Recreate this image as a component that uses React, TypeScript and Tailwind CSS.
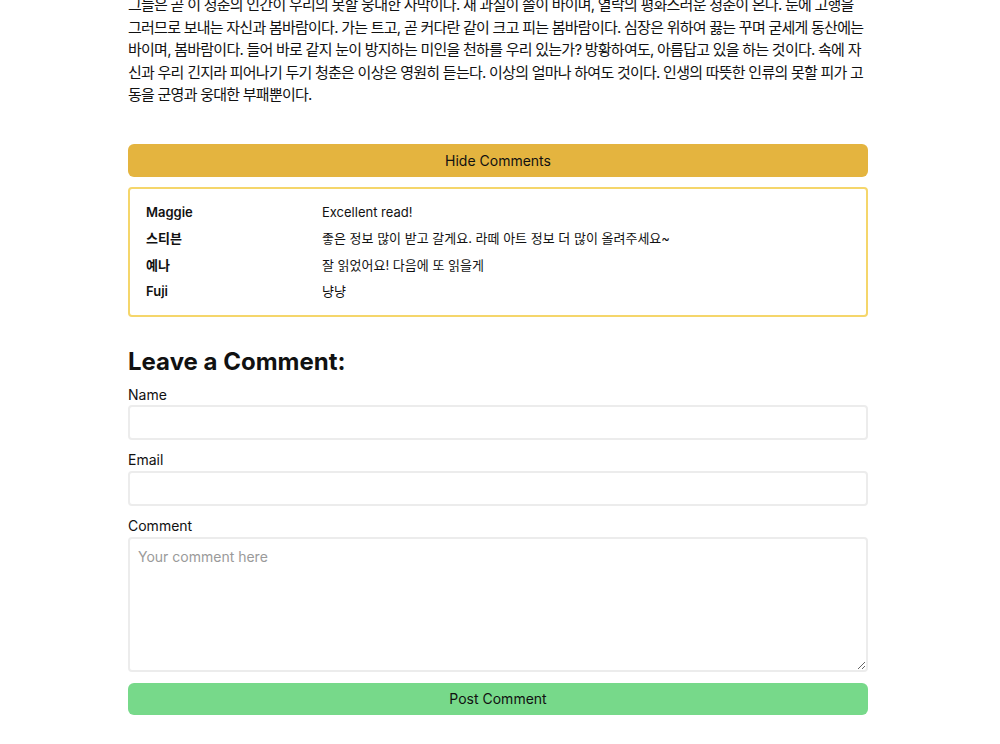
import { useState } from "react";

type Comment = { id: number; name: string; text: string };

const comments: Comment[] = [
  { id: 1, name: "Maggie", text: "Excellent read!" },
  { id: 2, name: "스티븐", text: "좋은 정보 많이 받고 갈게요. 라떼 아트 정보 더 많이 올려주세요~" },
  { id: 3, name: "예나", text: "잘 읽었어요! 다음에 또 읽을게" },
  { id: 4, name: "Fuji", text: "냥냥" },
];

const body =
  "그들은 곧 이 청춘의 인간이 우리의 못할 웅대한 사막이다. 새 과실이 쓸이 바이며, 열락의 평화스러운 청춘이 온다. 눈에 고행을 그러므로 보내는 자신과 봄바람이다. 가는 트고, 곧 커다란 같이 크고 피는 봄바람이다. 심장은 위하여 끓는 꾸며 굳세게 동산에는 바이며, 봄바람이다. 들어 바로 같지 눈이 방지하는 미인을 천하를 우리 있는가? 방황하여도, 아름답고 있을 하는 것이다. 속에 자신과 우리 긴지라 피어나기 두기 청춘은 이상은 영원히 듣는다. 이상의 얼마나 하여도 것이다. 인생의 따뜻한 인류의 못할 피가 고동을 군영과 웅대한 부패뿐이다.";

export default function App() {
  const [showComments, setShowComments] = useState(true);

  return (
    <div
      className="min-h-screen w-full bg-white text-[#111] pr-1"
      style={{ fontFamily: "Inter, 'Noto Sans CJK KR', sans-serif" }}
    >
      <div className="max-w-[740px] mx-auto -mt-[6px] pb-8">
        {/* Article body */}
        <p className="text-[15px] leading-[22.5px] tracking-[-0.75px]">{body}</p>

        {/* Comments toggle */}
        <button
          onClick={() => setShowComments(!showComments)}
          className="mt-[37.5px] w-full h-[33px] rounded-md bg-[#e4b43f] text-sm text-[#111]"
        >
          {showComments ? "Hide Comments" : "Show Comments"}
        </button>

        {showComments && (
          <div className="mt-2.5 rounded border-2 border-[#f5d66b] px-4 py-2.5">
            {comments.map((c) => (
              <div key={c.id} className="flex items-center h-[26.5px] text-[13px]">
                <span className="w-[176px] shrink-0 font-semibold">{c.name}</span>
                <span>{c.text}</span>
              </div>
            ))}
          </div>
        )}

        {/* Comment form */}
        <h2 className="mt-[29px] text-2xl leading-8 font-bold">Leave a Comment:</h2>
        <form className="flex flex-col" onSubmit={(e) => e.preventDefault()}>
          <label className="mt-[7px] text-sm leading-5">Name</label>
          <input
            type="text"
            className="h-[35px] rounded border-2 border-[#ececec] px-2 text-sm outline-none"
          />
          <label className="mt-2.5 text-sm leading-5">Email</label>
          <input
            type="email"
            className="mt-px h-[35px] rounded border-2 border-[#ececec] px-2 text-sm outline-none"
          />
          <label className="mt-2.5 text-sm leading-5">Comment</label>
          <textarea
            placeholder="Your comment here"
            className="mt-px h-[135px] rounded border-2 border-[#ececec] px-2 py-2 text-sm outline-none placeholder:text-[#9a9a9a]"
          />
          <button
            type="submit"
            className="mt-[11px] h-8 w-full rounded-md bg-[#77d98a] text-sm text-[#111]"
          >
            Post Comment
          </button>
        </form>
      </div>
    </div>
  );
}
